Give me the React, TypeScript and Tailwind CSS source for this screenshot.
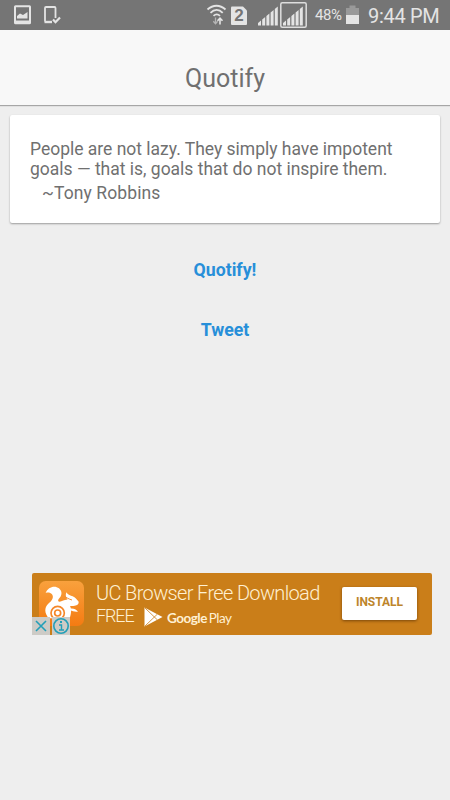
import React from 'react';

const WifiIcon: React.FC = () => (
  <svg className="h-[22px] w-[22px]" viewBox="0 0 22 22" fill="none" stroke="#e4e4e4" strokeWidth="1.8">
    <path d="M1.5 5.500C7 0.500 14 0.500 19.500 5.500" />
    <path d="M4.500 8.800C8.300 5 13 5 16.700 8.800" />
    <path d="M7.500 11.800C9.500 10 12 10 14 11.800" />
    <path d="M9.500 13.500v6M7.300 17.300L9.500 19.700l2.200-2.400" strokeWidth="1.3" stroke="#b5b5b5" />
    <path d="M14 20.500v-6M11.500 16.800L14 14.100l2.500 2.700" strokeWidth="1.6" />
  </svg>
);

const SignalIcon: React.FC<{ boxed?: boolean }> = ({ boxed }) => (
  <svg className="h-[26px] w-[27px]" viewBox="0 0 27 26">
    {boxed && <rect x="0.8" y="0.8" width="25.4" height="24.4" rx="1.5" fill="none" stroke="#dedede" strokeWidth="1.5" />}
    <path
      d="M3 23.5v-2.5l3-2.5v5zM7.2 23.5v-6l3-2.5v8.500zM11.400 23.500v-9.500l3-2.500v12zM15.600 23.500v-13l3-2.500v15.500zM19.800 23.500V7l3-2.500v19z"
      fill="#e4e4e4"
    />
  </svg>
);

const StatusBar: React.FC = () => (
  <header className="flex h-[30px] items-center bg-[#757575] text-[#e4e4e4]">
    <svg className="ml-[14px] h-5 w-[17px] shrink-0" viewBox="0 0 17 20">
      <rect x="1" y="1.200" width="15" height="17" rx="0.500" fill="none" stroke="#e4e4e4" strokeWidth="2" />
      <path d="M1 17h15" stroke="#e4e4e4" strokeWidth="3" />
      <path d="M3 13.500V11l3-2.500 3 1.500 4.500-3v6.500z" fill="#e4e4e4" />
    </svg>
    <svg className="ml-[12px] h-5 w-[18px] shrink-0" viewBox="0 0 18 20" fill="none" stroke="#e4e4e4">
      <path d="M2 16.500V3Q2 2 3 2H11.500Q12.500 2 12.500 3V13" strokeWidth="1.800" />
      <path d="M1.500 17H9" strokeWidth="2.400" />
      <path d="M10 14.500l2.500 2.700 4.500-4.700" strokeWidth="2.200" />
    </svg>
    <div className="ml-[145px] shrink-0"><WifiIcon /></div>
    <div className="relative ml-[3px] flex h-[19px] w-[16px] shrink-0 items-center justify-center">
      <svg className="absolute inset-0 h-full w-full" viewBox="0 0 16 19">
        <path d="M1 0.500H12L16 4.500V18Q16 19 15 19H1Q0 19 0 18V1.500Q0 0.500 1 0.500Z" fill="#e4e4e4" />
      </svg>
      <span className="relative font-['Liberation_Sans'] text-[17px] leading-none font-bold text-[#757575]">2</span>
    </div>
    <div className="ml-[8px] flex shrink-0">
      <SignalIcon />
      <div className="-ml-[2px]"><SignalIcon boxed /></div>
    </div>
    <span className="ml-[8px] w-[28px] shrink-0 pt-px text-[15px] tracking-[-0.4px] whitespace-nowrap">48%</span>
    <svg className="ml-[3px] h-5 w-[13px] shrink-0" viewBox="0 0 13 20">
      <path d="M0 3h3.500V0.500h6V3H13v7H0z" fill="#999" />
      <path d="M0 10h13v9H0z" fill="#e4e4e4" />
    </svg>
    <span className="ml-[9px] shrink-0 pt-px text-[20px] tracking-[-0.3px] whitespace-nowrap">9:44 PM</span>
  </header>
);

const UcLogo: React.FC = () => (
  <svg className="h-[45px] w-[45px]" viewBox="0 0 135 135">
    <defs>
      <linearGradient id="uc" x1="0" y1="0" x2="0" y2="1">
        <stop offset="0" stopColor="#f9a13d" />
        <stop offset="1" stopColor="#f47b12" />
      </linearGradient>
    </defs>
    <rect width="135" height="135" rx="20" fill="url(#uc)" />
    <path
      d="M20 36C27 18 47 12 60 22C72 33 68 46 59 54C55 60 59 65 67 61C75 57 82 57 86 55C80 51 79 43 82 34C87 42 95 44 101 46C109 49 113 56 119 62C120 68 115 73 107 74C101 75 96 74 93 76C98 84 97 98 92 112H29C16 96 16 80 27 69C38 61 46 50 39 40C34 34 26 34 20 36Z"
      fill="#fff"
    />
    <path d="M93 83c11-2 17 2 24 9-9 1-17-1-23-4z" fill="#fff" />
    <path d="M75 43c8 8 14 11 24 14" fill="none" stroke="#f6913a" strokeWidth="3" />
    <circle cx="56" cy="96" r="20" fill="none" stroke="#f5872a" strokeWidth="5" />
    <circle cx="56" cy="96" r="9" fill="none" stroke="#f5872a" strokeWidth="5" />
  </svg>
);

const AdBanner: React.FC = () => (
  <section className="relative mt-[233px] ml-8 flex h-[62px] w-[400px] rounded-[2px] bg-[#ca7e19]">
    <div className="mt-[8px] ml-[7px] h-[45px] shrink-0"><UcLogo /></div>
    <div className="ml-[12px] w-[246px] pt-[7px] text-[#fff0d2]">
      <div className="text-[20px] leading-[26px] font-light tracking-[-0.65px] whitespace-nowrap">UC Browser Free Download</div>
      <div className="flex h-[22px] items-center">
        <span className="-mt-[2px] w-[48px] text-[18px] leading-[22px] font-light tracking-[-1.1px]">FREE</span>
        <svg className="h-[20px] w-[19px]" viewBox="0 0 19 20">
          <path d="M0.500 0.500L18.500 10 0.500 19.500z" fill="#fff" />
          <path d="M1 1l12.500 12M1 19L13.500 7" stroke="#ca7e19" strokeWidth="0.800" />
        </svg>
        <span className="ml-[4px] pt-[2px] font-['Lato'] text-[13.500px] font-bold tracking-[-0.5px] whitespace-nowrap">
          Google <span className="-ml-px font-normal">Play</span>
        </span>
      </div>
    </div>
    <button className="mt-[14px] h-[33px] w-[75px] rounded-[2px] bg-white pb-[3px] text-[12px] font-bold text-[#bd852b] shadow-[0_1px_3px_rgba(70,35,0,0.6)]">
      INSTALL
    </button>

    {/* Ad choices */}
    <div className="absolute bottom-0 left-0 flex gap-[2px]">
      <svg className="h-[18px] w-[18px] bg-[#cdcbc6]" viewBox="0 0 18 18">
        <path d="M4 4l10 10M14 4L4 14" stroke="#239fb8" strokeWidth="1.600" />
      </svg>
      <svg className="h-[18px] w-[18px] bg-[#cdcbc6]" viewBox="0 0 18 18" fill="none" stroke="#239fb8">
        <circle cx="9" cy="9" r="7.200" strokeWidth="1.600" />
        <path d="M7 8h2.500v5M7 13h5" strokeWidth="1.400" />
        <path d="M8 5h2" strokeWidth="2" />
      </svg>
    </div>
  </section>
);

export default function App() {
  return (
    <div className="h-[800px] w-[450px] overflow-hidden bg-[#eeeeee] font-['Roboto',sans-serif] text-[#707070]">
      <StatusBar />
      <div className="h-[75px] bg-[#f8f8f8] pt-[32px] text-center shadow-[0_1px_1px_rgba(0,0,0,0.3)]">
        <h1 className="text-[25px] leading-[34px]">Quotify</h1>
      </div>

      <main>
        <div className="mx-[10px] mt-[10px] h-[108px] rounded-[2px] bg-white pt-[23.500px] pl-[20px] text-[17.500px] leading-[20px] tracking-[-0.01px] shadow-[0_1px_2px_rgba(0,0,0,0.35)]">
          <p className="whitespace-nowrap">
            People are not lazy. They simply have impotent
            <br />
            goals — that is, goals that do not inspire them.
          </p>
          <p className="mt-[4px] ml-[12px] tracking-[0.1px]">~Tony Robbins</p>
        </div>
        <div className="mt-[37px] flex flex-col items-center gap-10 text-[17.700px] leading-[20px] font-bold text-[#278fd9]">
          <button>Quotify!</button>
          <button>Tweet</button>
        </div>
        <AdBanner />
      </main>
    </div>
  );
}
